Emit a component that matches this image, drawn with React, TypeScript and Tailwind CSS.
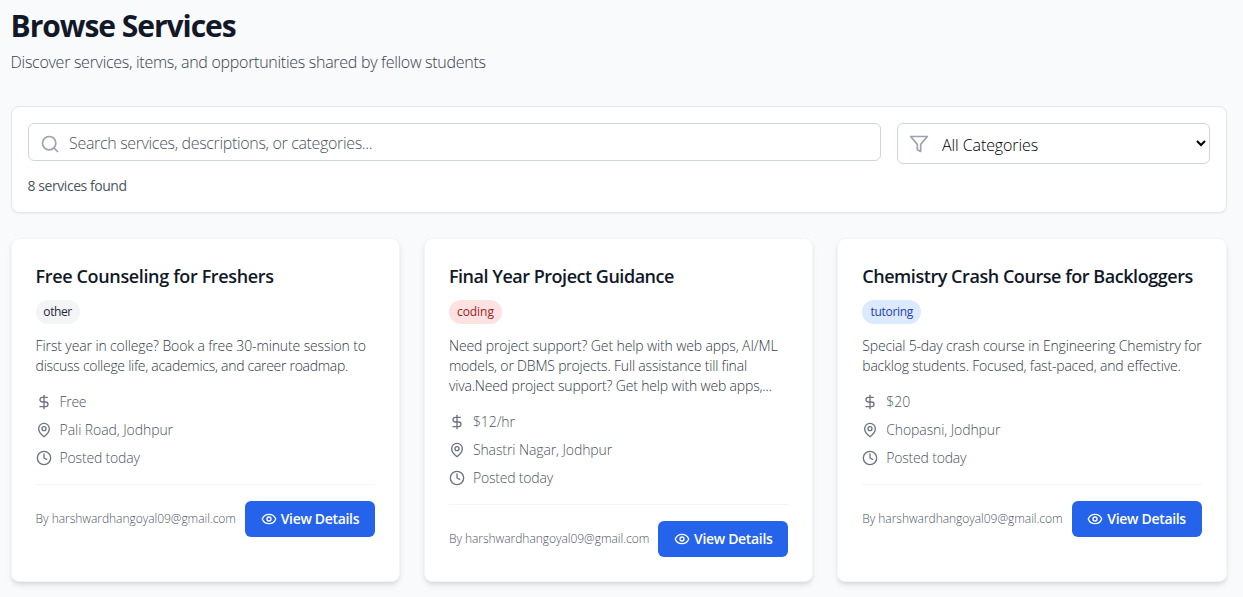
import { Clock, DollarSign, Eye, Search } from "lucide-react";

type Line = { text: string; tracking: string };

type Service = {
  title: Line;
  category: Line;
  badge: string;
  description: Line[];
  price: Line;
  location: Line;
};

const services: Service[] = [
  {
    title: { text: "Free Counseling for Freshers", tracking: "tracking-[-0.36px]" },
    category: { text: "other", tracking: "tracking-[-0.4px]" },
    badge: "w-11 bg-[#f3f4f6] text-[#1f2937]",
    description: [
      { text: "First year in college? Book a free 30-minute session to", tracking: "tracking-[-0.12px]" },
      { text: "discuss college life, academics, and career roadmap.", tracking: "tracking-[-0.285px]" },
    ],
    price: { text: "Free", tracking: "tracking-[-0.3px]" },
    location: { text: "Pali Road, Jodhpur", tracking: "tracking-[-0.08px]" },
  },
  {
    title: { text: "Final Year Project Guidance", tracking: "tracking-[-0.48px]" },
    category: { text: "coding", tracking: "tracking-[-0.04px]" },
    badge: "w-[53px] bg-[#fee2e2] text-[#991b1b]",
    description: [
      { text: "Need project support? Get help with web apps, AI/ML", tracking: "tracking-[-0.12px]" },
      { text: "models, or DBMS projects. Full assistance till final", tracking: "tracking-[-0.187px]" },
      { text: "viva.Need project support? Get help with web apps,...", tracking: "tracking-[-0.168px]" },
    ],
    price: { text: "$12/hr", tracking: "tracking-[-0.08px]" },
    location: { text: "Shastri Nagar, Jodhpur", tracking: "tracking-[-0.1px]" },
  },
  {
    title: { text: "Chemistry Crash Course for Backloggers", tracking: "tracking-[-0.45px]" },
    category: { text: "tutoring", tracking: "tracking-[-0.3px]" },
    badge: "w-[59px] bg-[#dbeafe] text-[#1e40af]",
    description: [
      { text: "Special 5-day crash course in Engineering Chemistry for", tracking: "tracking-[-0.16px]" },
      { text: "backlog students. Focused, fast-paced, and effective.", tracking: "tracking-[-0.19px]" },
    ],
    price: { text: "$20", tracking: "tracking-normal" },
    location: { text: "Chopasni, Jodhpur", tracking: "tracking-[-0.1px]" },
  },
];

const stroke = {
  viewBox: "0 0 24 24",
  fill: "none",
  stroke: "currentColor",
  strokeWidth: 2,
  strokeLinecap: "round",
  strokeLinejoin: "round",
} as const;

function FunnelIcon({ className }: { className: string }) {
  return (
    <svg {...stroke} className={className}>
      <polygon points="22 3 2 3 10 12.46 10 19 14 21 14 12.46 22 3" />
    </svg>
  );
}

function PinIcon({ className }: { className: string }) {
  return (
    <svg {...stroke} className={className}>
      <path d="M20 10c0 6-8 12-8 12s-8-6-8-12a8 8 0 0 1 16 0Z" />
      <circle cx="12" cy="10" r="3" />
    </svg>
  );
}

function ServiceCard({ service }: { service: Service }) {
  return (
    <article className="rounded-lg border border-[#f3f4f6] bg-white px-6 pt-[23px] pb-6 shadow-md">
      <h3 className={`text-lg leading-7 font-semibold whitespace-nowrap text-[#111827] ${service.title.tracking}`}>
        {service.title.text}
      </h3>
      <span
        className={`mt-2.5 flex h-6 items-center justify-center rounded-full text-xs font-medium ${service.badge} ${service.category.tracking}`}
      >
        {service.category.text}
      </span>
      <p className="mt-3 text-sm leading-5 font-light text-[#2f3947]">
        {service.description.map((line) => (
          <span key={line.text} className={`block whitespace-nowrap ${line.tracking}`}>
            {line.text}
          </span>
        ))}
      </p>
      <ul className="mt-4 flex flex-col gap-2 text-sm leading-5 font-light text-[#4b5563]">
        <li className={`flex items-center gap-2 ${service.price.tracking}`}>
          <DollarSign className="size-4 text-[#6b7280]" />
          {service.price.text}
        </li>
        <li className={`flex items-center gap-2 ${service.location.tracking}`}>
          <PinIcon className="size-4 text-[#6b7280]" />
          {service.location.text}
        </li>
        <li className="flex items-center gap-2 tracking-[-0.19px]">
          <Clock className="size-4 text-[#6b7280]" />
          Posted today
        </li>
      </ul>
      <div className="mt-4 flex items-center justify-between border-t border-[#f3f4f6] pt-4">
        <span className="text-xs font-light tracking-[-0.03px] whitespace-nowrap text-[#4b5563]">
          By harshwardhangoyal09@gmail.com
        </span>
        <button className="flex h-9 w-[130px] shrink-0 items-center justify-center gap-1 rounded-md bg-[#2563eb] text-sm font-semibold tracking-[-0.32px] whitespace-nowrap text-white">
          <Eye className="size-4" />
          View Details
        </button>
      </div>
    </article>
  );
}

export default function App() {
  return (
    <div className="h-[597px] overflow-hidden bg-[#f9fafb] pt-2 pl-[10.6px] font-['Open_Sans',sans-serif]">
      <div className="w-[1216px]">
        <h1 className="text-3xl leading-9 font-bold tracking-[-1.04px] text-[#111827]">Browse Services</h1>
        <p className="mt-1.5 text-base leading-6 font-light tracking-[-0.28px] text-[#374151]">
          Discover services, items, and opportunities shared by fellow students
        </p>

        <section className="mt-8 h-[107px] rounded-lg border border-[#e5e7eb] bg-white p-4 shadow-xs">
          <div className="flex items-start gap-4">
            <label className="flex h-[38px] w-[853px] items-center rounded-md border border-[#d1d5db] pl-[11.5px]">
              <Search className="mt-[3px] size-5 shrink-0 text-[#9ca3af]" />
              <input
                type="text"
                placeholder="Search services, descriptions, or categories..."
                className="ml-[9px] w-full pt-px text-base leading-6 font-light tracking-[-0.34px] outline-none placeholder:text-[#4b5563]"
              />
            </label>
            <label className="flex h-[41px] w-[313px] items-center rounded-md border border-[#d1d5db] pl-[11.5px]">
              <FunnelIcon className="size-5 shrink-0 text-[#9ca3af]" />
              <select className="ml-[9px] h-full w-full pt-0.5 text-base font-light tracking-[-0.1px] text-black outline-none">
                <option>All Categories</option>
                <option>tutoring</option>
                <option>coding</option>
                <option>other</option>
              </select>
            </label>
          </div>
          <p className="mt-3 text-sm leading-5 tracking-[-0.448px] text-[#4b5563]">8 services found</p>
        </section>

        <div className="mt-[25px] grid h-[344px] grid-cols-3 gap-6">
          {services.map((service) => (
            <ServiceCard key={service.title.text} service={service} />
          ))}
        </div>
      </div>
    </div>
  );
}
